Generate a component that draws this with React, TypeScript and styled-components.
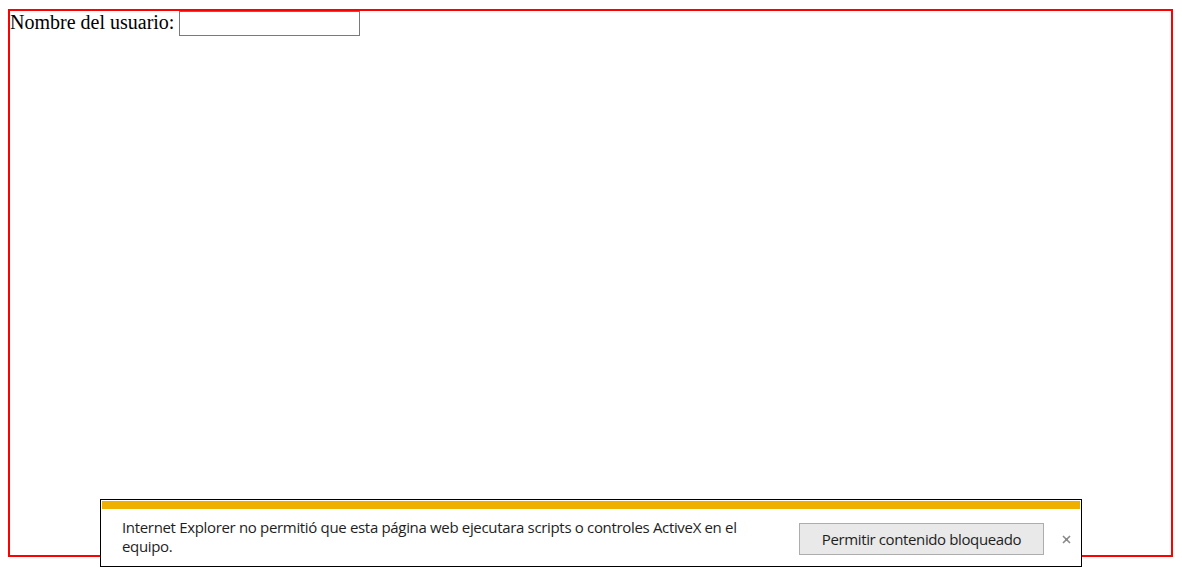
import React from "react";
import styled, { createGlobalStyle } from "styled-components";

const Global = createGlobalStyle`
  html, body { margin: 0; padding: 0; background: #fff; }
  body { font-family: "Liberation Serif", "Times New Roman", serif; font-size: 16px; color: #000; }
`;

const Frame = styled.div`
  box-sizing: border-box;
  margin: 9px 9px 0 8px;
  height: 548px;
  border: 2px solid #ff0000;
`;

const Field = styled.label`
  display: inline-flex;
  align-items: baseline;
  gap: 5px;
  font-family: "Liberation Serif", "Times New Roman", serif;
  font-size: 20px;
  line-height: 23px;
`;

const TextInput = styled.input`
  box-sizing: border-box;
  width: 181px;
  height: 25px;
  margin: 0;
  padding: 1px 3px;
  border: 1px solid #7a7a7a;
  border-top-color: #6f6f6f;
  font-family: "Liberation Sans", Arial, sans-serif;
  font-size: 15px;
  background: #fff;
  outline: none;
`;

const Banner = styled.div`
  position: fixed;
  left: 100px;
  bottom: 0;
  width: 982px;
  box-sizing: border-box;
  height: 68px;
  border: 1px solid #000;
  background: #fff;
  padding: 1px;
  display: flex;
  flex-direction: column;
`;

const Stripe = styled.div`
  height: 8px;
  background: #f0b000;
  flex: none;
`;

const BannerBody = styled.div`
  flex: 1;
  display: flex;
  align-items: center;
  padding: 4px 3px 0 20px;
  font-family: "Segoe UI", "Open Sans", "Noto Sans", sans-serif;
  color: #1e1e1e;
`;

const Message = styled.p`
  margin: -4px 0 0 0;
  width: 640px;
  font-size: 15px;
  line-height: 19px;
  letter-spacing: -0.33px;
`;

const ActionButton = styled.button`
  margin-left: auto;
  box-sizing: border-box;
  width: 245px;
  height: 32px;
  border: 1px solid #adadad;
  background: #e9e9e9;
  color: #1e1e1e;
  font-family: "Segoe UI", "Open Sans", "Noto Sans", sans-serif;
  font-size: 15px;
  letter-spacing: -0.38px;
  padding: 0;
  cursor: default;
`;

const Close = styled.span`
  display: flex;
  align-items: center;
  justify-content: center;
  width: 10px;
  height: 10px;
  margin-left: 17px;
  margin-right: 6px;
  color: #8a8a8a;
`;

export default function App() {
  return (
    <>
      <Global />
      <Frame>
        <Field>
          Nombre del usuario:
          <TextInput type="text" />
        </Field>
      </Frame>
      <Banner>
        <Stripe />
        <BannerBody>
          <Message>
            Internet Explorer no permitió que esta página web ejecutara scripts o controles ActiveX en el equipo.
          </Message>
          <ActionButton>Permitir contenido bloqueado</ActionButton>
          <Close aria-label="Cerrar">
            <svg width="9" height="9" viewBox="0 0 9 9">
              <path d="M1 1 L8 8 M8 1 L1 8" stroke="#8a8a8a" strokeWidth="1.6" />
              <rect x="3" y="3" width="3" height="3" fill="#8a8a8a" />
            </svg>
          </Close>
        </BannerBody>
      </Banner>
    </>
  );
}
